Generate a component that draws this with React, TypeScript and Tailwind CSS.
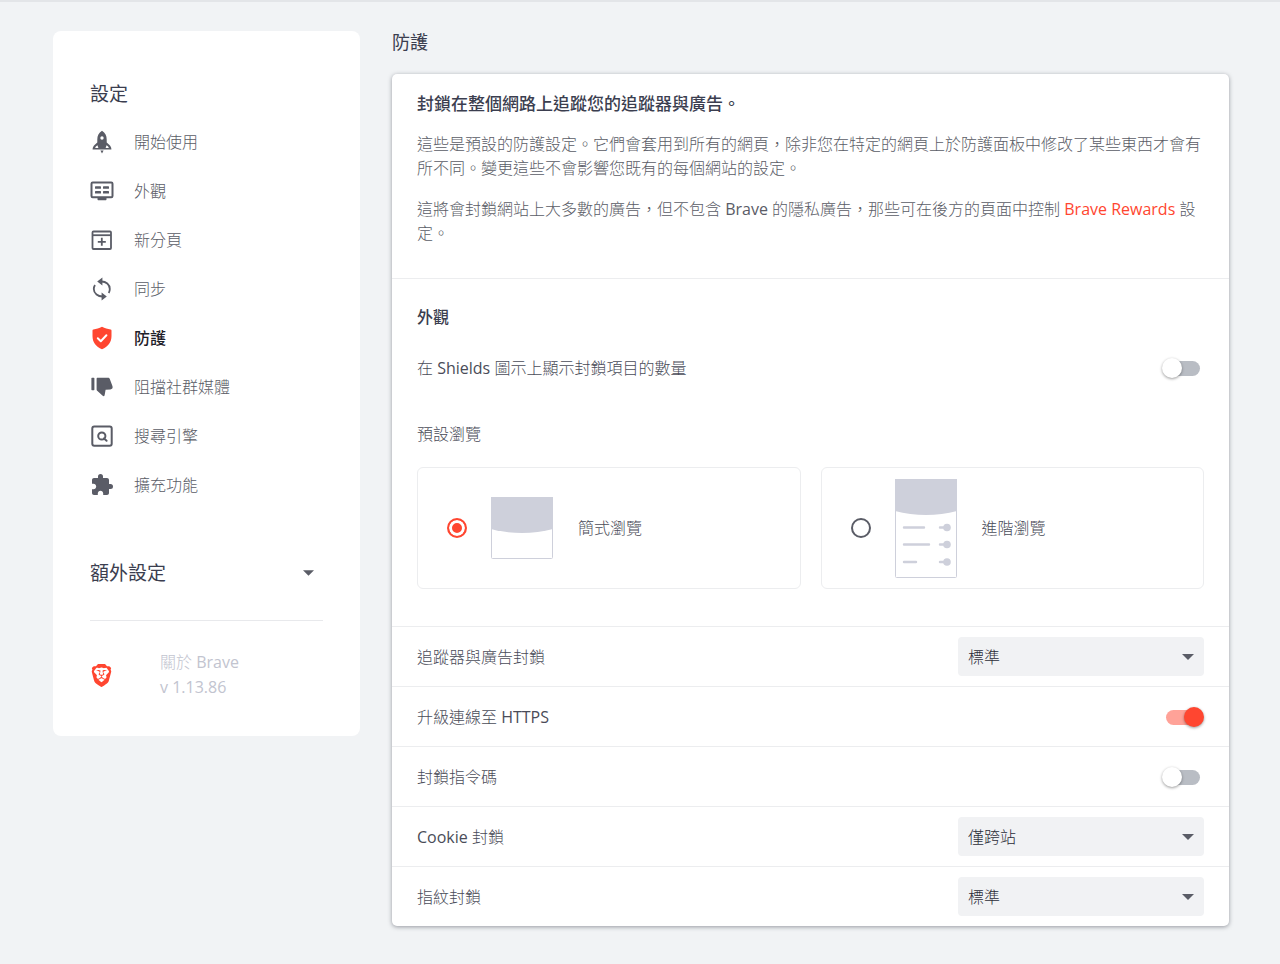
import React, { useState } from "react";
import { SiBrave } from "react-icons/si";
import { MdExtension } from "react-icons/md";

const RocketIcon = () => (
  <svg width="24" height="24" viewBox="0 0 24 24" fill="currentColor">
    <path
      fillRule="evenodd"
      d="M12 .8C8.700 3 7.300 5.800 7.300 9.400v3L4.800 14.800c-1.500 1.400-2.200 2.700-2.200 4.800h18.800c0-2.100-.7-3.400-2.200-4.800l-2.500-2.400v-3c0-3.600-1.400-6.400-4.700-8.600zM12 6.300a1.700 1.700 0 1 1 0 3.400 1.700 1.700 0 0 1 0-3.400zM7.400 15.200l1 2.900H5.200c.2-1.200.9-1.900 2.200-2.900zm9.200 0c1.300 1 2 1.700 2.200 2.900h-3.200z"
    />
    <path d="M10.400 20.600h3.200L12 23.400z" />
  </svg>
);

const AppearanceIcon = () => (
  <svg width="24" height="24" viewBox="0 0 24 24" fill="currentColor">
    <rect x="1.500" y="3.500" width="21" height="14.800" rx="1.200" fill="none" stroke="currentColor" strokeWidth="2" />
    <rect x="5" y="7.200" width="6" height="2.600" rx=".6" />
    <rect x="13" y="7.200" width="6" height="2.600" rx=".6" />
    <rect x="5" y="12" width="6" height="2.600" rx=".6" />
    <rect x="13" y="12" width="6" height="2.600" rx=".6" />
    <path d="M7.500 19h9v1.300c0 .6-.4 1-1 1h-7c-.6 0-1-.4-1-1z" />
  </svg>
);

const NewTabIcon = () => (
  <svg width="24" height="24" viewBox="0 0 24 24" fill="none" stroke="currentColor" strokeWidth="1.800">
    <rect x="2.500" y="3.500" width="18.500" height="17.500" rx="1" />
    <path d="M2.500 7.200H21" />
    <path d="M11.800 9.800v8M7.800 13.800h8" />
  </svg>
);

const SyncIcon = () => (
  <svg width="24" height="24" viewBox="0 0 24 24" fill="none" stroke="currentColor" strokeWidth="1.800">
    <path d="M11 4.500c5-.2 8.800 3 8.800 7.500 0 1.600-.4 3-1.100 4.100" />
    <path d="M13 19.500c-5 .2-9.200-3-9.200-7.500 0-1.500.4-2.900 1.200-4.100" />
    <path d="M12.400.6v7.800L7.200 4.500zM11.600 15.600v7.800l5.200-3.900z" fill="currentColor" stroke="none" />
  </svg>
);

const ShieldIcon = () => (
  <svg width="24" height="24" viewBox="0 0 24 24">
    <path
      d="M12 .8c-2.800 1.500-5.700 2.400-8.600 2.700-.5.100-.9.500-.9 1v5.600c0 6.300 3.400 10.800 9.500 13.100 6.100-2.300 9.500-6.800 9.500-13.100V4.500c0-.5-.4-.9-.9-1C17.700 3.200 14.800 2.300 12 .8z"
      fill="#ff4630"
    />
    <path d="M7.800 12.300l3 2.900 5.600-6" fill="none" stroke="#fff" strokeWidth="2" strokeLinecap="round" strokeLinejoin="round" />
  </svg>
);

const ThumbDownIcon = () => (
  <svg width="24" height="24" viewBox="0 0 24 24" fill="currentColor">
    <rect x="1.400" y="2.800" width="3" height="12.400" rx=".6" />
    <path d="M7.600 2.800h10.400c.9 0 1.500.5 1.800 1.300l2.700 7.200c.5 1.700-.3 3-2.200 3.100l-4.700.4-1 5.500c-.3 1-1.200 1.200-1.900.5l-5.800-5.400c-.2-.2-.3-.5-.3-.9V3.800c0-.6.400-1 1-1z" />
  </svg>
);

const SearchEngineIcon = () => (
  <svg width="24" height="24" viewBox="0 0 24 24" fill="none" stroke="currentColor" strokeWidth="2">
    <rect x="2.300" y="2.500" width="19.400" height="19.200" rx="2" />
    <circle cx="11.800" cy="12" r="3.600" />
    <path d="M14 14.400l2.600 2.400" strokeLinecap="round" />
  </svg>
);

const Arrow = ({ className = "" }: { className?: string }) => (
  <svg width="12" height="6" viewBox="0 0 12 6" className={className} fill="#5a5c66">
    <path d="M0 0h12L6 6z" />
  </svg>
);

const SimplePreview = () => (
  <svg width="62" height="62" viewBox="0 0 62 62">
    <rect x=".5" y=".5" width="61" height="61" rx="1" fill="#fff" stroke="#ced0db" />
    <path d="M0 0h62v32c-20 5.300-42 5.300-62 0z" fill="#ced0db" />
  </svg>
);

const AdvancedPreview = () => (
  <svg width="62" height="99" viewBox="0 0 62 99">
    <rect x=".5" y=".5" width="61" height="98" rx="1" fill="#fff" stroke="#ced0db" />
    <path d="M0 0h62v32c-20 5.300-42 5.300-62 0z" fill="#ced0db" />
    <g stroke="#ced0db" strokeWidth="2.400" strokeLinecap="round">
      <path d="M9 48.500h20M9 65.500h25M9 83h12M45 48.500h7M45 65.500h7M45 83h7" />
    </g>
    <g fill="#ced0db">
      <circle cx="52" cy="48.500" r="3.800" />
      <circle cx="52" cy="65.500" r="3.800" />
      <circle cx="52" cy="83" r="3.800" />
    </g>
  </svg>
);

// latin words are set heavier than the light chinese text around them
const Latin = ({ children }: { children: React.ReactNode }) => (
  <span className="font-normal">{children}</span>
);

const navItems = [
  { label: "開始使用", icon: <RocketIcon /> },
  { label: "外觀", icon: <AppearanceIcon /> },
  { label: "新分頁", icon: <NewTabIcon /> },
  { label: "同步", icon: <SyncIcon /> },
  { label: "防護", icon: <ShieldIcon />, active: true },
  { label: "阻擋社群媒體", icon: <ThumbDownIcon /> },
  { label: "搜尋引擎", icon: <SearchEngineIcon /> },
  { label: "擴充功能", icon: <MdExtension size={24} /> },
];

const Sidebar = () => {
  return (
    <aside className="w-[307px] shrink-0 rounded-lg bg-white px-[37px] pt-12 pb-9">
      <h1 className="text-[19px] leading-[30px] font-normal text-[#3b3e4f]">設定</h1>
      <nav className="mt-2">
        {navItems.map((item) => (
          <a
            key={item.label}
            href="#"
            className={
              item.active
                ? "flex h-[49px] items-center font-medium text-[#1e2029]"
                : "flex h-[49px] items-center font-light text-[#5a5c66]"
            }
          >
            <span className="flex w-[44px]">{item.icon}</span>
            {item.label}
          </a>
        ))}
      </nav>
      <button className="mt-[49px] flex w-full items-center justify-between pr-[9px] text-[19px] leading-[30px] font-normal text-[#3b3e4f]">
        額外設定
        <Arrow className="w-[11px]" />
      </button>
      <hr className="mt-8 border-[#e8e9ec]" />
      <a href="#" className="mt-[29px] flex items-center text-[#c2c4cf]">
        <SiBrave size={23} className="text-[#ff4630]" />
        <span className="ml-[47px] leading-[25px]">
          關於 <Latin>Brave</Latin>
          <br />
          <Latin>v 1.13.86</Latin>
        </span>
      </a>
    </aside>
  );
};

const Toggle = ({ id, on = false }: { id: string; on?: boolean }) => {
  const [checked, setChecked] = useState(on);
  return (
    <span className={checked ? "relative h-[20px] w-[38px]" : "relative mr-1 h-[20px] w-[38px]"}>
      <input
        id={id}
        type="checkbox"
        role="switch"
        checked={checked}
        onChange={(e) => setChecked(e.target.checked)}
        className="peer absolute inset-0 z-10 m-0 cursor-pointer opacity-0"
      />
      <span className="absolute top-[3px] right-0 h-[15px] w-[34px] rounded-full bg-[#b9bdc4] peer-checked:right-auto peer-checked:left-0 peer-checked:bg-[#ffa298]" />
      <span className="absolute top-0 left-0 h-[20px] w-[20px] rounded-full bg-white shadow-[0_1px_3px_rgba(0,0,0,0.4)] peer-checked:right-0 peer-checked:left-auto peer-checked:bg-[#ff4630]" />
    </span>
  );
};

const Dropdown = ({ id, options }: { id: string; options: string[] }) => (
  <span className="relative flex h-[39px] w-[246px] items-center">
    <select
      id={id}
      className="h-full w-full appearance-none rounded-[4px] bg-[#f1f2f4] px-[10px] font-light text-[#2b2d38]"
    >
      {options.map((o) => (
        <option key={o}>{o}</option>
      ))}
    </select>
    <Arrow className="pointer-events-none absolute right-[10px]" />
  </span>
);

type TRow = { id: string; label: React.ReactNode; control: React.ReactNode };

const rows: TRow[] = [
  { id: "ads", label: "追蹤器與廣告封鎖", control: <Dropdown id="ads" options={["標準", "積極", "停用"]} /> },
  { id: "https", label: <>升級連線至 <Latin>HTTPS</Latin></>, control: <Toggle id="https" on /> },
  { id: "scripts", label: "封鎖指令碼", control: <Toggle id="scripts" /> },
  { id: "cookies", label: <><Latin>Cookie</Latin> 封鎖</>, control: <Dropdown id="cookies" options={["僅跨站", "全部", "停用"]} /> },
  { id: "fingerprint", label: "指紋封鎖", control: <Dropdown id="fingerprint" options={["標準", "嚴格", "停用"]} /> },
];

const views = [
  { id: "simple", label: "簡式瀏覽", preview: <SimplePreview /> },
  { id: "advanced", label: "進階瀏覽", preview: <AdvancedPreview /> },
];

const App = () => {
  const [view, setView] = useState("simple");

  return (
    <div
      lang="zh-Hant"
      className="flex min-h-screen items-start gap-8 border-t-2 border-[#e3e5e8] bg-[#f1f3f5] pt-[29px] pr-[51px] pb-9 pl-[53px] font-['Open_Sans','Noto_Sans_CJK_TC',sans-serif] text-[16px] font-light"
    >
      <Sidebar />
      <main className="min-w-0 flex-1">
        <h2 className="text-[18px] leading-[22px] font-normal text-[#3b3e4f]">防護</h2>
        <div className="mt-[21px] rounded-[5px] bg-white shadow-[0_1px_4px_rgba(60,64,75,0.5)]">
          <section className="px-[25px] pt-[18px] pb-[33px] leading-[24px] text-[#5a5c66]">
            <h3 className="text-[17px] leading-[24px] font-medium text-[#3b3e4f]">封鎖在整個網路上追蹤您的追蹤器與廣告。</h3>
            <p className="mt-4">
              這些是預設的防護設定。它們會套用到所有的網頁，除非您在特定的網頁上於防護面板中修改了某些東西才會有所不同。變更這些不會影響您既有的每個網站的設定。
            </p>
            <p className="mt-[17px]">
              這將會封鎖網站上大多數的廣告，但不包含 <Latin>Brave</Latin> 的隱私廣告，那些可在後方的頁面中控制{" "}
              <a href="#" className="font-normal text-[#ff4630]">Brave Rewards</a> 設定。
            </p>
          </section>
          <section className="border-t border-[#ecedef] px-[25px] pt-[26px] pb-[37px] text-[#4a4c58]">
            <h3 className="leading-[24px] font-medium text-[#3b3e4f]">外觀</h3>
            <div className="mt-[26px] flex items-center justify-between leading-[26px]">
              <label htmlFor="count">在 <Latin>Shields</Latin> 圖示上顯示封鎖項目的數量</label>
              <Toggle id="count" />
            </div>
            <fieldset className="mt-10">
              <legend className="leading-[26px]">預設瀏覽</legend>
              <div className="mt-5 grid grid-cols-2 gap-5">
                {views.map((v) => (
                  <label
                    key={v.id}
                    className="flex h-[122px] items-center rounded-[6px] border border-[#ecedef] pl-[29px]"
                  >
                    <input
                      type="radio"
                      name="view"
                      checked={view === v.id}
                      onChange={() => setView(v.id)}
                      className="m-0 h-[20px] w-[20px] appearance-none rounded-full border-2 border-[#5a5c66] checked:border-[#ff4630] checked:bg-[#ff4630] checked:shadow-[inset_0_0_0_3px_#fff]"
                    />
                    <span className="ml-6">{v.preview}</span>
                    <span className="ml-[25px]">{v.label}</span>
                  </label>
                ))}
              </div>
            </fieldset>
          </section>
          {rows.map((row) => (
            <div
              key={row.id}
              className="flex h-[60px] items-center justify-between border-t border-[#ecedef] px-[25px] text-[#4a4c58]"
            >
              <label htmlFor={row.id}>{row.label}</label>
              {row.control}
            </div>
          ))}
        </div>
      </main>
    </div>
  );
};

export default App;
